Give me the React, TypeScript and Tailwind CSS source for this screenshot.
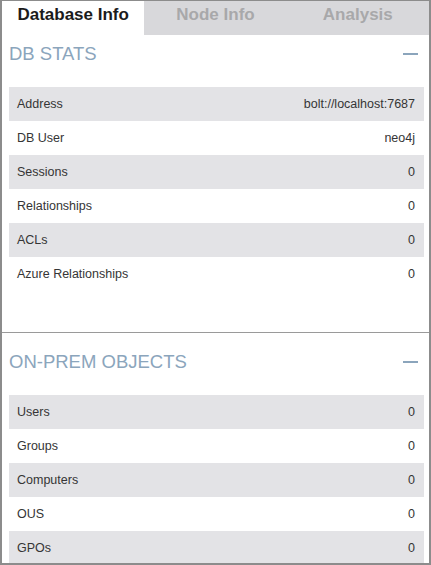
const dbStats: [string, string][] = [
  ['Address', 'bolt://localhost:7687'],
  ['DB User', 'neo4j'],
  ['Sessions', '0'],
  ['Relationships', '0'],
  ['ACLs', '0'],
  ['Azure Relationships', '0'],
];

const onPrem: [string, string][] = [
  ['Users', '0'],
  ['Groups', '0'],
  ['Computers', '0'],
  ['OUS', '0'],
  ['GPOs', '0'],
];

function StatRows({ rows }: { rows: [string, string][] }) {
  return (
    <div className="ml-[7px] mr-[5px]">
      {rows.map(([label, value], i) => (
        <div
          key={label}
          className={`flex h-[34px] items-center justify-between pl-[8px] pr-[9px] text-[12.5px] text-[#353535] ${
            i % 2 === 0 ? 'bg-[#e3e3e6]' : 'bg-white'
          }`}
        >
          <span>{label}</span>
          <span>{value}</span>
        </div>
      ))}
    </div>
  );
}

function SectionHeader({ title }: { title: string }) {
  return (
    <div className="flex h-[20px] items-center justify-between pl-[7px] pr-[11px]">
      <span className="text-[18.5px] leading-none text-[#8ba5bc]">{title}</span>
      <span className="block h-[2px] w-[15px] bg-[#8ba5bc]" />
    </div>
  );
}

export default function App() {
  const tabs = ['Database Info', 'Node Info', 'Analysis'];
  return (
    <div
      className="h-[565px] w-[431px] overflow-hidden border-x-2 border-t border-b-2 border-[#8c8c8c] bg-white"
      style={{ fontFamily: '"Liberation Sans", Arial, sans-serif' }}
    >
      {/* Tabs */}
      <div className="grid h-[34px] grid-cols-3">
        {tabs.map((t, i) => (
          <div
            key={t}
            className={`flex items-center justify-center pb-[6px] text-[17px] font-bold ${
              i === 0 ? 'bg-white text-[#1b1b1b]' : 'bg-[#d8d8db] text-[#a8a8aa]'
            }`}
          >
            {t}
          </div>
        ))}
      </div>

      {/* DB stats */}
      <div className="h-[297px] pt-[9px]">
        <SectionHeader title="DB STATS" />
        <div className="pt-[23px]">
          <StatRows rows={dbStats} />
        </div>
      </div>

      <div className="h-px bg-[#9a9a9a]" />

      {/* On-prem objects */}
      <div className="pt-[19px]">
        <SectionHeader title="ON-PREM OBJECTS" />
        <div className="pt-[23px]">
          <StatRows rows={onPrem} />
        </div>
      </div>
    </div>
  );
}
